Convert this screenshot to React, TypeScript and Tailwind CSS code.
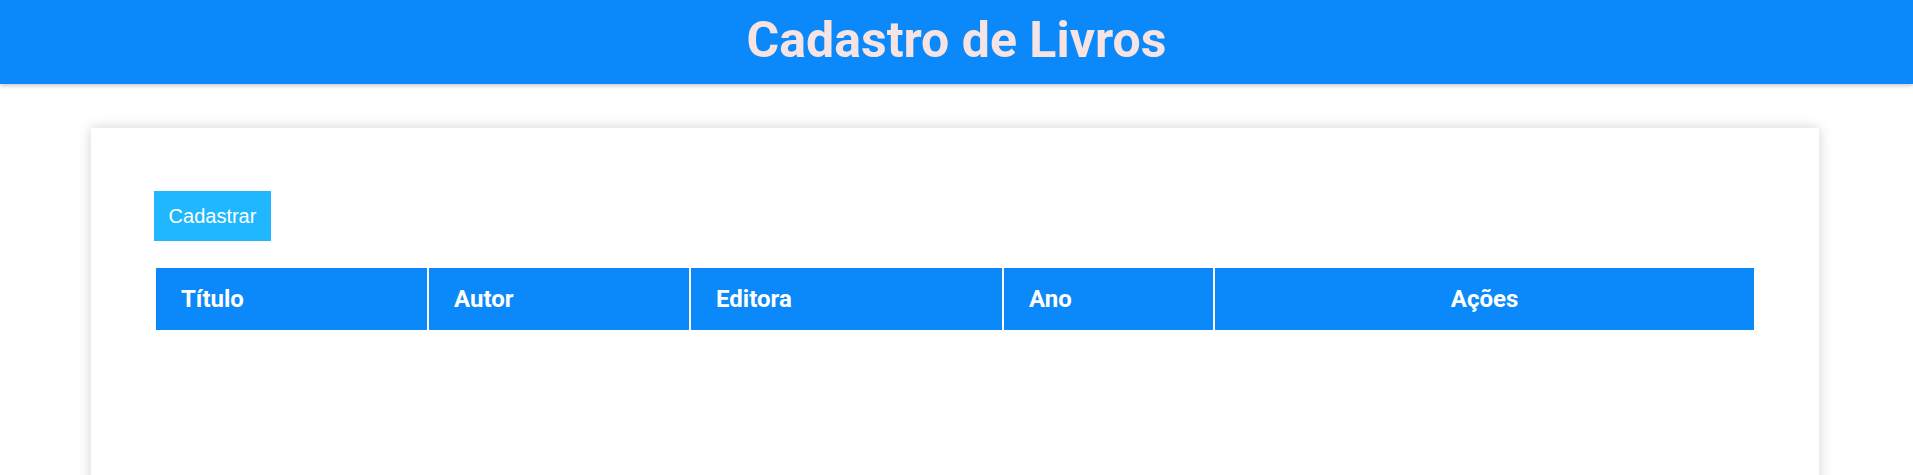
import React from "react";

const columns = [
  { label: "Título", width: "w-[271px]", align: "text-left" },
  { label: "Autor", width: "w-[260px]", align: "text-left" },
  { label: "Editora", width: "w-[311px]", align: "text-left" },
  { label: "Ano", width: "w-[209px]", align: "text-left" },
  { label: "Ações", width: "", align: "text-center" },
];

export default function App() {
  return (
    <div className="min-h-screen bg-white font-['Roboto',sans-serif]">
      {/* Header */}
      <header className="h-[84px] bg-[#0b88f9] shadow-[0_2px_4px_rgba(0,0,0,0.2)]">
        <h1 className="pt-[11px] text-center text-[50px] font-bold leading-[58px] text-[#f6e4e4]">
          Cadastro de Livros
        </h1>
      </header>

      {/* Card */}
      <main className="pt-[44px] pl-[91px] pr-[94px]">
        <div className="min-h-[420px] bg-white px-[63px] pt-[63px] shadow-[0_0_12px_rgba(0,0,0,0.18)]">
          <button className="flex h-[50px] w-[117px] items-center justify-center bg-[#21b7fe] font-['Liberation_Sans',Arial,sans-serif] text-[20px] leading-[23px] text-white">
            Cadastrar
          </button>

          <table className="mt-[25px] w-full border-separate border-spacing-[2px]">
            <thead>
              <tr>
                {columns.map((c) => (
                  <th
                    key={c.label}
                    className={`${c.width} ${c.align} bg-[#0b88f9] px-[25px] py-[17px] text-[24px] font-bold leading-[28px] text-white`}
                  >
                    {c.label}
                  </th>
                ))}
              </tr>
            </thead>
            <tbody></tbody>
          </table>
        </div>
      </main>
    </div>
  );
}
